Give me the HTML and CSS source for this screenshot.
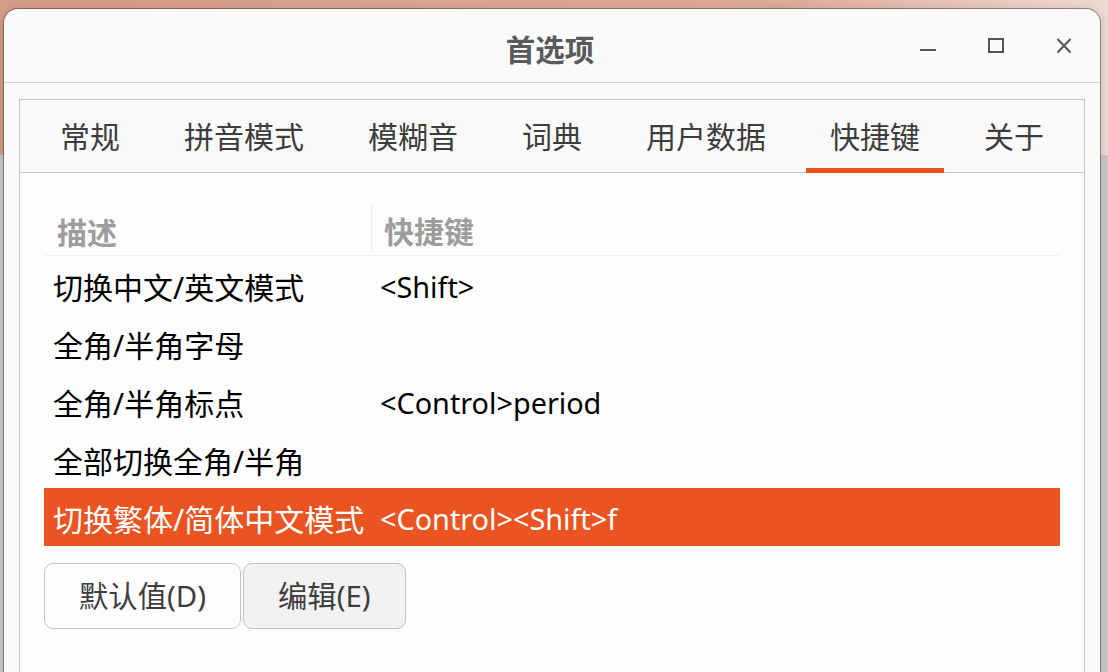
FILE: index.html
```html
<!DOCTYPE html>
<html lang="zh-CN">
<head>
<meta charset="utf-8">
<title>首选项</title>
<link rel="stylesheet" href="styles.css">
</head>
<body>
<div class="dialog">
  <header class="headerbar">
    <div class="hb-side"></div>
    <div class="title">首选项</div>
    <div class="hb-side controls">
      <button class="wbtn" aria-label="最小化">
        <svg width="16" height="16" viewBox="0 0 16 16"><rect x="0" y="11" width="16" height="2" fill="#555"/></svg>
      </button>
      <button class="wbtn" aria-label="最大化">
        <svg width="16" height="16" viewBox="0 0 16 16"><rect x="1" y="1" width="14" height="13" fill="none" stroke="#555" stroke-width="2"/></svg>
      </button>
      <button class="wbtn" aria-label="关闭">
        <svg width="16" height="16" viewBox="0 0 16 16"><path d="M1.5 1 L14.5 14.5 M14.5 1 L1.5 14.5" stroke="#555" stroke-width="2" fill="none"/></svg>
      </button>
    </div>
  </header>

  <div class="notebook">
    <nav class="tabs">
      <div class="tab">常规</div>
      <div class="tab">拼音模式</div>
      <div class="tab">模糊音</div>
      <div class="tab">词典</div>
      <div class="tab">用户数据</div>
      <div class="tab active">快捷键</div>
      <div class="tab">关于</div>
    </nav>
    <div class="page">
      <div class="tree">
        <div class="row head">
          <div class="cell c1">描述</div>
          <div class="cell c2">快捷键</div>
        </div>
        <div class="row">
          <div class="cell c1">切换中文/英文模式</div>
          <div class="cell c2"><span class="lat">&lt;Shift&gt;</span></div>
        </div>
        <div class="row">
          <div class="cell c1">全角/半角字母</div>
          <div class="cell c2"></div>
        </div>
        <div class="row">
          <div class="cell c1">全角/半角标点</div>
          <div class="cell c2"><span class="lat">&lt;Control&gt;period</span></div>
        </div>
        <div class="row">
          <div class="cell c1">全部切换全角/半角</div>
          <div class="cell c2"></div>
        </div>
        <div class="row selected">
          <div class="cell c1">切换繁体/简体中文模式</div>
          <div class="cell c2"><span class="lat">&lt;Control&gt;&lt;Shift&gt;f</span></div>
        </div>
      </div>
      <div class="actions">
        <button class="btn">默认值(D)</button>
        <button class="btn hover">编辑(E)</button>
      </div>
    </div>
  </div>
</div>
</body>
</html>
```

FILE: styles.css
```css
html, body {
  margin: 0;
  padding: 0;
  height: 672px;
  overflow: hidden;
}

body {
  background:
    linear-gradient(180deg, rgba(0,0,0,0) 0, rgba(0,0,0,0) 155px, #c8c8c8 155px),
    linear-gradient(90deg, #d49b87 0%, #dcaa98 70%, #ecd9d2 100%);
  font-family: "Noto Sans", "Noto Sans CJK SC", sans-serif;
  font-size: 30px;
}

.dialog {
  margin: 9px 0 0 4px;
  width: 1096px;
  height: 720px;
  background: #fafafa;
  border-radius: 14px 14px 0 0;
  box-shadow: 0 0 0 1px rgba(70, 40, 30, 0.45), 0 2px 8px rgba(0, 0, 0, 0.2);
  display: flex;
  flex-direction: column;
}

.headerbar {
  height: 73px;
  border-bottom: 1px solid #d2d2d2;
  display: grid;
  grid-template-columns: 1fr auto 1fr;
  align-items: center;
  flex: none;
}

.title {
  font-weight: bold;
  color: #5a5a5a;
  padding-top: 6px;
  font-size: 29.5px;
  margin-left: -4px;
}

.controls {
  display: flex;
  justify-content: flex-end;
  gap: 20px;
  padding-right: 12px;
}

.wbtn {
  width: 48px;
  height: 40px;
  border: 0;
  background: transparent;
  padding: 0;
  display: flex;
  align-items: center;
  justify-content: center;
}

.wbtn svg {
  display: block;
}

.notebook {
  margin: 16px 15px 0 15px;
  border: 1px solid #c6c6c6;
  border-bottom: 0;
  flex: 1;
  display: flex;
  flex-direction: column;
  background: #fdfdfd;
}

.tabs {
  height: 72px;
  background: #fafafa;
  border-bottom: 1px solid #c6c6c6;
  display: flex;
  padding-left: 16px;
  gap: 16px;
  flex: none;
}

.tab {
  padding: 0 24px;
  display: flex;
  align-items: center;
  color: #3d3d3d;
  line-height: 1;
  padding-top: 2px;
}

.tab.active {
  border-bottom: 5px solid #e95420;
  margin-bottom: -1px;
  padding-top: 6px;
}

.page {
  padding: 32px 24px 0 24px;
}

.tree {
  display: flex;
  flex-direction: column;
}

.row {
  display: flex;
  height: 58px;
  color: #000;
}

.row.head {
  height: 50px;
  border-bottom: 1px solid #f1f1f1;
  color: #9d9d9d;
  font-weight: bold;
}

.cell {
  display: flex;
  align-items: center;
  white-space: nowrap;
  padding-top: 2px;
}

.lat {
  font-size: 28.8px;
}

.c1 {
  width: 327px;
  padding-left: 9px;
  box-sizing: border-box;
}

.c2 {
  flex: 1;
  padding-left: 9px;
}

.row.head .c1 {
  padding-left: 13px;
}

.row.head .c2 {
  padding-left: 12px;
  border-left: 1px solid #ececec;
  margin: 0 0 2px 0;
}

.row.selected {
  background: #e95420;
  color: #fff;
}

.actions {
  display: flex;
  gap: 2px;
  margin-top: 17px;
}

.btn {
  font: inherit;
  font-size: 29.33px;
  color: #3d3d3d;
  height: 66px;
  padding: 0 34px;
  border: 1px solid #c4c4c4;
  border-radius: 9px;
  background: #fdfdfd;
  line-height: 1;
  padding-top: 2px;
}

.btn.hover {
  background: #f2f2f2;
}
```
